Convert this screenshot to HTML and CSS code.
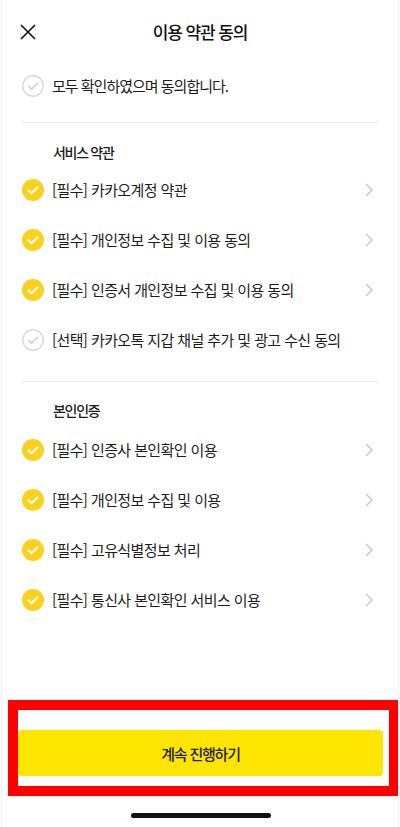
FILE: index.html
```html
<!DOCTYPE html>
<html lang="ko">
<head>
<meta charset="utf-8">
<title>이용 약관 동의</title>
<link rel="stylesheet" href="styles.css">
</head>
<body>
<div class="screen">
  <header class="header">
    <svg class="close" viewBox="0 0 16 16" width="16" height="16"><path d="M1 1 L15 15 M15 1 L1 15" stroke="#111" stroke-width="1.6" fill="none"/></svg>
    <h1 class="title">이용 약관 동의</h1>
  </header>

  <div class="row row-all">
    <svg class="chk" viewBox="0 0 22 22" width="22" height="22"><circle cx="11" cy="11" r="10.2" fill="#fff" stroke="#d9d9d9" stroke-width="1.4"/><path d="M6.6 11.2 L9.6 14.1 L15.4 8.3" stroke="#cfcfcf" stroke-width="1.5" fill="none" stroke-linecap="round" stroke-linejoin="round"/></svg>
    <span class="label label-all">모두 확인하였으며 동의합니다.</span>
  </div>

  <div class="divider first"></div>

  <section class="section">
    <h2 class="section-title">서비스 약관</h2>
    <div class="row">
      <svg class="chk" viewBox="0 0 22 22" width="22" height="22"><circle cx="11" cy="11" r="11" fill="#fad21e"/><path d="M6.4 11.3 L9.6 14.3 L15.6 8.3" stroke="#fff" stroke-width="2" fill="none" stroke-linecap="round" stroke-linejoin="round"/></svg>
      <span class="label">[필수] 카카오계정 약관</span>
      <svg class="chev" viewBox="0 0 8 14" width="8" height="14"><path d="M1 1 L7 7 L1 13" stroke="#c6c6c6" stroke-width="1.4" fill="none"/></svg>
    </div>
    <div class="row">
      <svg class="chk" viewBox="0 0 22 22" width="22" height="22"><circle cx="11" cy="11" r="11" fill="#fad21e"/><path d="M6.4 11.3 L9.6 14.3 L15.6 8.3" stroke="#fff" stroke-width="2" fill="none" stroke-linecap="round" stroke-linejoin="round"/></svg>
      <span class="label">[필수] 개인정보 수집 및 이용 동의</span>
      <svg class="chev" viewBox="0 0 8 14" width="8" height="14"><path d="M1 1 L7 7 L1 13" stroke="#c6c6c6" stroke-width="1.4" fill="none"/></svg>
    </div>
    <div class="row">
      <svg class="chk" viewBox="0 0 22 22" width="22" height="22"><circle cx="11" cy="11" r="11" fill="#fad21e"/><path d="M6.4 11.3 L9.6 14.3 L15.6 8.3" stroke="#fff" stroke-width="2" fill="none" stroke-linecap="round" stroke-linejoin="round"/></svg>
      <span class="label">[필수] 인증서 개인정보 수집 및 이용 동의</span>
      <svg class="chev" viewBox="0 0 8 14" width="8" height="14"><path d="M1 1 L7 7 L1 13" stroke="#c6c6c6" stroke-width="1.4" fill="none"/></svg>
    </div>
    <div class="row">
      <svg class="chk" viewBox="0 0 22 22" width="22" height="22"><circle cx="11" cy="11" r="10.2" fill="#fff" stroke="#d9d9d9" stroke-width="1.4"/><path d="M6.6 11.2 L9.6 14.1 L15.4 8.3" stroke="#cfcfcf" stroke-width="1.5" fill="none" stroke-linecap="round" stroke-linejoin="round"/></svg>
      <span class="label">[선택] 카카오톡 지갑 채널 추가 및 광고 수신 동의</span>
    </div>
  </section>

  <div class="divider second"></div>

  <section class="section">
    <h2 class="section-title second-title">본인인증</h2>
    <div class="row">
      <svg class="chk" viewBox="0 0 22 22" width="22" height="22"><circle cx="11" cy="11" r="11" fill="#fad21e"/><path d="M6.4 11.3 L9.6 14.3 L15.6 8.3" stroke="#fff" stroke-width="2" fill="none" stroke-linecap="round" stroke-linejoin="round"/></svg>
      <span class="label">[필수] 인증사 본인확인 이용</span>
      <svg class="chev" viewBox="0 0 8 14" width="8" height="14"><path d="M1 1 L7 7 L1 13" stroke="#c6c6c6" stroke-width="1.4" fill="none"/></svg>
    </div>
    <div class="row">
      <svg class="chk" viewBox="0 0 22 22" width="22" height="22"><circle cx="11" cy="11" r="11" fill="#fad21e"/><path d="M6.4 11.3 L9.6 14.3 L15.6 8.3" stroke="#fff" stroke-width="2" fill="none" stroke-linecap="round" stroke-linejoin="round"/></svg>
      <span class="label">[필수] 개인정보 수집 및 이용</span>
      <svg class="chev" viewBox="0 0 8 14" width="8" height="14"><path d="M1 1 L7 7 L1 13" stroke="#c6c6c6" stroke-width="1.4" fill="none"/></svg>
    </div>
    <div class="row">
      <svg class="chk" viewBox="0 0 22 22" width="22" height="22"><circle cx="11" cy="11" r="11" fill="#fad21e"/><path d="M6.4 11.3 L9.6 14.3 L15.6 8.3" stroke="#fff" stroke-width="2" fill="none" stroke-linecap="round" stroke-linejoin="round"/></svg>
      <span class="label">[필수] 고유식별정보 처리</span>
      <svg class="chev" viewBox="0 0 8 14" width="8" height="14"><path d="M1 1 L7 7 L1 13" stroke="#c6c6c6" stroke-width="1.4" fill="none"/></svg>
    </div>
    <div class="row">
      <svg class="chk" viewBox="0 0 22 22" width="22" height="22"><circle cx="11" cy="11" r="11" fill="#fad21e"/><path d="M6.4 11.3 L9.6 14.3 L15.6 8.3" stroke="#fff" stroke-width="2" fill="none" stroke-linecap="round" stroke-linejoin="round"/></svg>
      <span class="label">[필수] 통신사 본인확인 서비스 이용</span>
      <svg class="chev" viewBox="0 0 8 14" width="8" height="14"><path d="M1 1 L7 7 L1 13" stroke="#c6c6c6" stroke-width="1.4" fill="none"/></svg>
    </div>
  </section>

  <div class="footer">
    <button class="cta">계속 진행하기</button>
    <div class="highlight"></div>
  </div>

  <div class="home-bar"></div>
</div>
</body>
</html>
```

FILE: styles.css
```css
* { box-sizing: border-box; }
html, body { margin: 0; padding: 0; background: #fff; }
body {
  font-family: "Noto Sans CJK KR", "Noto Sans", sans-serif;
  color: #1c1c1c;
}
.screen {
  position: relative;
  width: 398px;
  height: 827px;
  margin-left: 1px;
  border-left: 1px solid #efefef;
  border-right: 1px solid #efefef;
  overflow: hidden;
}
.header {
  position: relative;
  height: 64px;
  display: flex;
  align-items: center;
  justify-content: center;
}
.close {
  position: absolute;
  left: 18px;
  top: 24px;
}
.title {
  margin: 0;
  font-size: 17px;
  font-weight: 500;
  letter-spacing: -1.1px;
  line-height: 20px;
  color: #111;
}
.row {
  display: flex;
  align-items: center;
  height: 50px;
  padding-left: 20px;
  padding-right: 25px;
}
.row-all { height: 44px; }
.chk { flex: none; }
.label {
  margin-left: 8px;
  flex: 1;
  font-size: 15px;
  letter-spacing: -0.6px;
  line-height: 20px;
  color: #1c1c1c;
  white-space: nowrap;
}
.label-all { letter-spacing: -1px; }
.chev { flex: none; }
.divider {
  height: 1px;
  background: #e9e9e9;
  margin: 0 20px;
}
.divider.first { margin-top: 14px; }
.divider.second { margin-top: 16px; }
.section-title {
  margin: 0;
  padding: 20px 0 4px 51px;
  font-size: 14px;
  font-weight: 500;
  line-height: 18px;
  letter-spacing: -1.3px;
  color: #1c1c1c;
}
.second-title { padding-top: 19px; padding-bottom: 6px; }
.footer {
  position: relative;
  margin-top: 105px;
  padding: 0 15px 0 16px;
}
.cta {
  display: block;
  width: 100%;
  height: 46px;
  border: none;
  border-radius: 4px;
  background: #fee500;
  font-family: "Noto Sans CJK KR", sans-serif;
  font-size: 15px;
  font-weight: 500;
  letter-spacing: -1.2px;
  color: #1c1c1c;
}
.highlight {
  position: absolute;
  left: 6px;
  right: -1px;
  top: -30px;
  height: 96px;
  border: 10px solid #ff0000;
  pointer-events: none;
}
.home-bar {
  position: absolute;
  left: 129px;
  top: 813px;
  width: 140px;
  height: 5px;
  border-radius: 3px;
  background: #111;
}
```
